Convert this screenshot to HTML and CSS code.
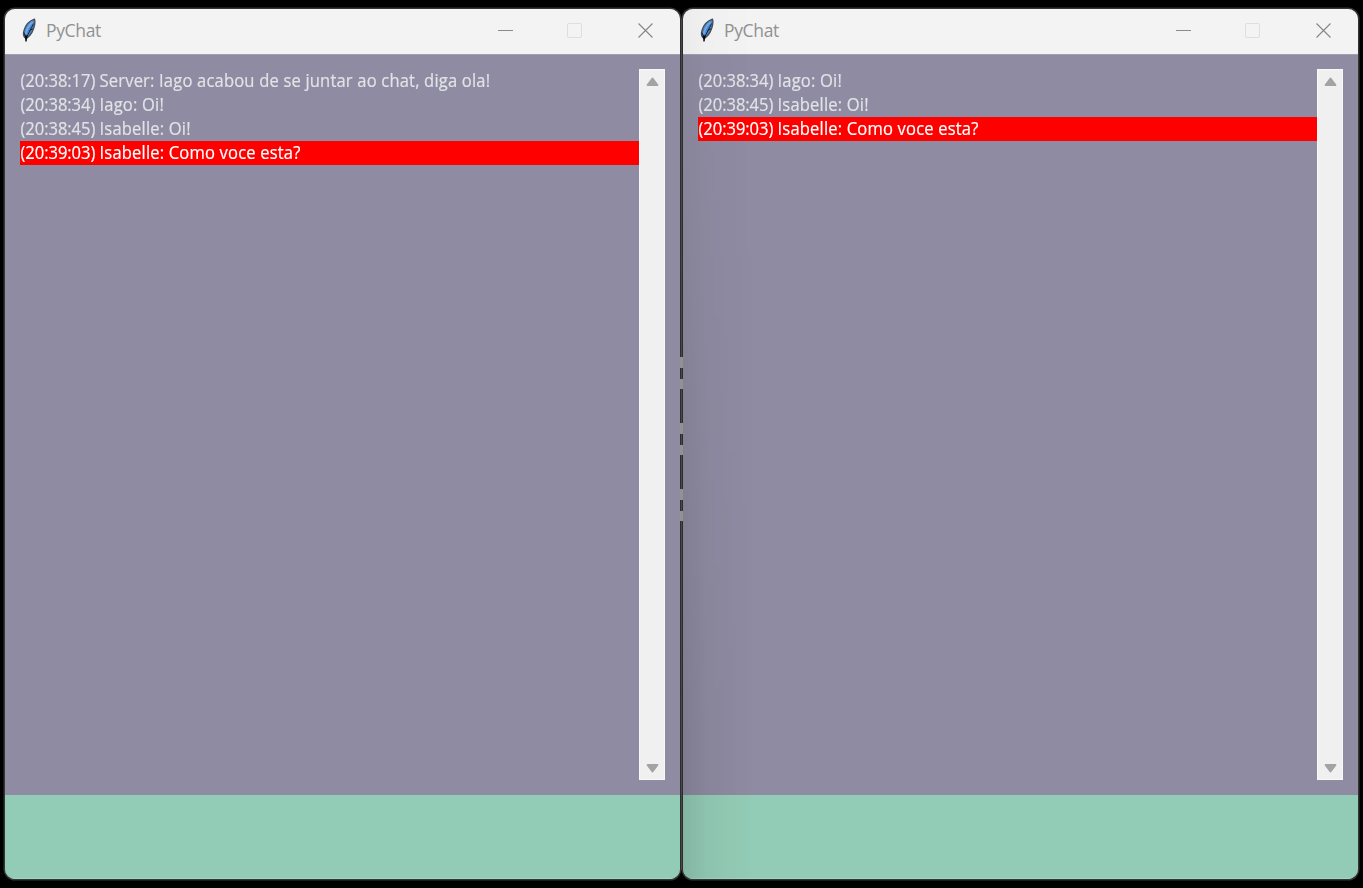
FILE: index.html
```html
<!DOCTYPE html>
<html lang="pt">
<head>
<meta charset="utf-8">
<title>PyChat</title>
<link rel="stylesheet" href="styles.css">
</head>
<body>
<svg class="defs" width="0" height="0">
  <symbol id="feather" viewBox="0 0 16 26">
    <path d="M13.4 1.2C9 2.8 4.4 7 3 12.5C2.2 15.5 2.4 18 3.6 19.4L6 20C9.4 17.5 12.5 12.5 13.6 7C14 4.5 14.2 2.5 13.4 1.2Z" fill="#4a86c8" stroke="#4a4f57" stroke-width="1.3"/>
    <path d="M11.6 4C7.5 7.5 5.6 11.5 4.8 16" fill="none" stroke="#6aaaf0" stroke-width="2"/>
    <path d="M12.6 5.5C10.3 10.5 7.4 15 5 21M3 14.5L4.4 18.8M8.6 12.5L11.8 10.8" fill="none" stroke="#1b2530" stroke-width="1"/>
    <path d="M4.2 17.5L5 23.4L6.2 17.5" fill="#080a0c" stroke="#080a0c" stroke-width=".9"/>
  </symbol>
  <symbol id="close" viewBox="0 0 15 15"><path d="M.5 .5L14.5 14.5M14.5 .5L.5 14.5" stroke="#858585" stroke-width="1.1"/></symbol>
  <symbol id="arrow" viewBox="0 0 13 10"><path d="M6.5 1.6L11.4 8H1.6Z" fill="#a3a3a3" stroke="#a3a3a3" stroke-width="2" stroke-linejoin="round"/></symbol>
</svg>
<main class="desktop">
  <section class="window">
    <header class="titlebar">
      <svg class="logo"><use href="#feather"/></svg>
      <span class="title">PyChat</span>
      <span class="minimize"></span>
      <span class="maximize"></span>
      <svg class="close"><use href="#close"/></svg>
    </header>
    <div class="chat">
      <div class="messages">
        <p class="message"><span class="line"><span class="time">(20:38:17) </span>Server: Iago acabou de se juntar ao chat, diga ola!</span></p>
        <p class="message"><span class="line"><span class="time">(20:38:34) </span>Iago: Oi!</span></p>
        <p class="message"><span class="line"><span class="time">(20:38:45) </span>Isabelle: Oi!</span></p>
        <p class="message private"><span class="line"><span class="time">(20:39:03) </span>Isabelle: Como voce esta?</span></p>
      </div>
      <div class="scrollbar">
        <svg class="arrow"><use href="#arrow"/></svg>
        <svg class="arrow down"><use href="#arrow"/></svg>
      </div>
    </div>
    <footer class="entry"></footer>
  </section>
  <div class="seam">
    <i class="pair"></i><i class="pair"></i><i class="pair"></i>
  </div>
  <section class="window shaded">
    <header class="titlebar">
      <svg class="logo"><use href="#feather"/></svg>
      <span class="title">PyChat</span>
      <span class="minimize"></span>
      <span class="maximize"></span>
      <svg class="close"><use href="#close"/></svg>
    </header>
    <div class="chat">
      <div class="messages">
        <p class="message"><span class="line"><span class="time">(20:38:34) </span>Iago: Oi!</span></p>
        <p class="message"><span class="line"><span class="time">(20:38:45) </span>Isabelle: Oi!</span></p>
        <p class="message private"><span class="line"><span class="time">(20:39:03) </span>Isabelle: Como voce esta?</span></p>
      </div>
      <div class="scrollbar">
        <svg class="arrow"><use href="#arrow"/></svg>
        <svg class="arrow down"><use href="#arrow"/></svg>
      </div>
    </div>
    <footer class="entry"></footer>
  </section>
</main>
</body>
</html>
```
FILE: styles.css
```css
* { box-sizing: border-box; }
body { margin: 0; background: #000; font-family: "Open Sans", "Noto Sans", sans-serif; overflow: hidden; }
.defs { position: absolute; }
.desktop { display: flex; height: 888px; padding: 9px 5px 8px; }
.window {
  width: 675px; height: 870px; flex: none; display: flex; flex-direction: column;
  border-radius: 10px; overflow: hidden; background: #8e8ba2;
  box-shadow: 0 0 0 1.5px #353535;
}
.titlebar { height: 45px; display: flex; align-items: center; padding: 0 27px 2px 16px; background: #f3f3f3; }
.logo { width: 16px; height: 26px; margin-right: 9px; }
.title { width: 56px; white-space: nowrap; font-size: 17.5px; line-height: 24px; margin-top: -1px; letter-spacing: -0.35px; color: #919191; }
.minimize { width: 15px; height: 1px; margin-left: auto; background: #8b8b8b; }
.maximize { width: 15px; height: 15px; margin: 0 56px 0 54px; border: 1px solid #dedede; border-radius: 2px; }
.close { width: 15px; height: 15px; }
.chat { height: 741px; display: flex; padding: 14px 15px 15px; border-top: 1px solid #a19eb2; }
.messages { flex: 1; }
.message { margin: 0; height: 24px; line-height: 22px; font-size: 18px; color: #e1e3e6; white-space: nowrap; }
.line { display: inline-block; padding-left: .6px; transform-origin: 0 50%; transform: scaleX(.92); letter-spacing: .19px; -webkit-text-stroke: .2px currentColor; }
.time { letter-spacing: -.06px; }
.private { background: #f00; color: #fff; }
.scrollbar { width: 26px; height: 711px; display: flex; flex-direction: column; align-items: center; justify-content: space-between; padding: 7px 0 6px 1px; background: #f0f0f0; border: 1px solid #f8f8f9; }
.arrow { width: 13px; height: 10px; }
.down { transform: rotate(180deg); }
.entry { flex: 1; background: #93ccb6; border-bottom: 1px solid #a1d7c3; }
.seam { position: relative; z-index: 1; width: 3px; height: 851px; margin-top: 10px; padding-top: 338px; display: flex; flex-direction: column; gap: 34px; background: linear-gradient(90deg, #202020, #484848, #202020); }
.pair { height: 32px; flex: none; border: solid #92928f; border-width: 11px 0 10px; }
.shaded { position: relative; }
.shaded::after { content: ""; position: absolute; top: 0; bottom: 0; left: 0; width: 70px; background: linear-gradient(90deg, rgba(0,0,0,.11), rgba(0,0,0,.04) 35%, transparent); -webkit-mask-image: linear-gradient(rgba(0,0,0,.25), #000 85%); mask-image: linear-gradient(rgba(0,0,0,.25), #000 85%); }
```
